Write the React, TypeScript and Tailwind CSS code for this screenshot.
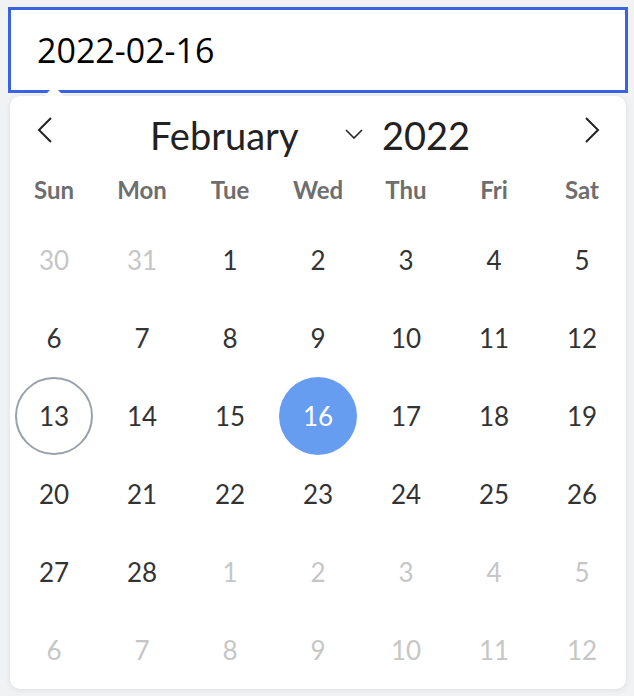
import React from 'react';

const weekdays = ['Sun', 'Mon', 'Tue', 'Wed', 'Thu', 'Fri', 'Sat'];

type Day = { n: number; muted?: boolean; today?: boolean; selected?: boolean };

const buildDays = (): Day[] => {
  const days: Day[] = [{ n: 30, muted: true }, { n: 31, muted: true }];
  for (let i = 1; i <= 28; i++) days.push({ n: i, today: i === 13, selected: i === 16 });
  for (let i = 1; i <= 12; i++) days.push({ n: i, muted: true });
  return days;
};

const Chevron = ({ dir }: { dir: 'left' | 'right' }) => (
  <svg width="16" height="26" viewBox="0 0 16 26" fill="none" stroke="#222" strokeWidth="2">
    {dir === 'left' ? <polyline points="14,1 2,13 14,25" /> : <polyline points="2,1 14,13 2,25" />}
  </svg>
);

export default function App() {
  const days = buildDays();
  return (
    <div className="min-h-[696px] w-[634px] bg-[#f1f2f4] pt-[7px] pl-[8px]" style={{ fontFamily: 'Lato, "Noto Sans", sans-serif' }}>
      {/* Input */}
      <div className="w-[620px] h-[86px] border-[3px] border-[#3a63e3] bg-white flex items-center pl-[26px]">
        <span className="text-[34px] text-black" style={{ fontFamily: '"Open Sans", "Noto Sans", sans-serif' }}>2022-02-16</span>
      </div>

      {/* Popup */}
      <div className="relative ml-[2px] mt-[3px] w-[616px] bg-white rounded-[10px] shadow-[0_1px_6px_rgba(0,0,0,0.08)]">
        <div className="absolute -top-[7px] left-[37px] w-[14px] h-[14px] bg-white rotate-45 rounded-[2px]" />

        {/* Header */}
        <div className="relative h-[80px] flex items-center pl-[27px] pr-[26px]">
          <div className="-mt-[12px]">
            <Chevron dir="left" />
          </div>
          <div className="flex items-center ml-[97px] -mt-[2px]">
            <span className="text-[38px] text-[#222] w-[195px]">February</span>
            <svg width="18" height="10" viewBox="0 0 18 10" fill="none" stroke="#222" strokeWidth="1.6" className="-mt-[2px]">
              <polyline points="1,1 9,9 17,1" />
            </svg>
            <span className="text-[38px] text-[#222] ml-[19px]">2022</span>
          </div>
          <div className="ml-auto -mt-[12px]">
            <Chevron dir="right" />
          </div>
        </div>

        {/* Weekdays */}
        <div className="grid grid-cols-7 h-[28px] items-center">
          {weekdays.map((d) => (
            <div key={d} className="text-center text-[24px] font-bold text-[#6e6e6e] leading-[28px]">{d}</div>
          ))}
        </div>

        {/* Days */}
        <div className="grid grid-cols-7 mt-[17px]">
          {days.map((d, i) => (
            <div key={i} className="h-[78px] flex items-center justify-center">
              <div
                className={
                  'w-[78px] h-[78px] rounded-full flex items-center justify-center text-[26px] ' +
                  (d.selected
                    ? 'bg-[#679df0] text-white'
                    : d.today
                    ? 'border-2 border-[#9aa1ab] text-[#333]'
                    : d.muted
                    ? 'text-[#c6c6c6]'
                    : 'text-[#333]')
                }
              >
                {d.n}
              </div>
            </div>
          ))}
        </div>
      </div>
    </div>
  );
}
